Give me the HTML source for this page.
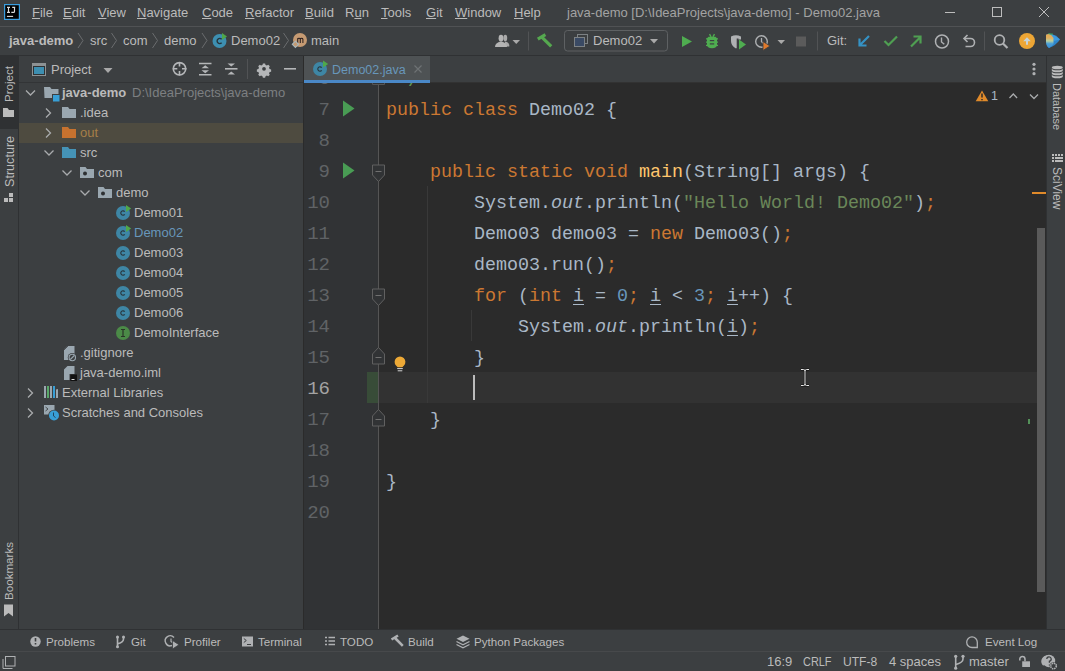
<!DOCTYPE html>
<html><head><meta charset="utf-8">
<style>
*{box-sizing:border-box;margin:0;padding:0}
html,body{width:1065px;height:671px;overflow:hidden;background:#3c3f41;font-family:"Liberation Sans",sans-serif;font-size:13px;color:#bbbbbb;position:relative}
.a{position:absolute}
svg{position:absolute;overflow:visible}
.t{position:absolute;white-space:pre;line-height:16px}
u{text-decoration:underline;text-underline-offset:1px;text-decoration-thickness:1px}
.code{position:absolute;left:386px;font-family:"Liberation Mono",monospace;font-size:18.33px;white-space:pre;line-height:31px;color:#a9b7c6}
.ln{position:absolute;font-family:"Liberation Mono",monospace;font-size:19px;white-space:pre;line-height:31px;color:#606366;text-align:right;width:30px;left:300px}
.k{color:#cc7832}.s{color:#6a8759}.n{color:#6897bb}.m{color:#ffc66d}.f{color:#a9b7c6;font-style:italic}
.ul{text-decoration:underline;text-underline-offset:3px;text-decoration-thickness:1px}
.tr{position:absolute;line-height:20px;white-space:pre;height:20px}
.bb{position:absolute;font-size:11.6px;line-height:16px;white-space:pre;top:634px;color:#bbbbbb}
.st{position:absolute;font-size:13px;line-height:16px;white-space:pre;top:654px;color:#bbbbbb}
</style></head><body>
<!-- backgrounds -->
<div class="a" style="left:0;top:26px;width:1065px;height:1px;background:#505254"></div>
<div class="a" style="left:0;top:55px;width:1065px;height:1px;background:#2f3133"></div>
<div class="a" style="left:0;top:56px;width:18px;height:73px;background:#2f3133"></div>
<div class="a" style="left:18px;top:56px;width:1px;height:573px;background:#2f3133"></div>
<div class="a" style="left:19px;top:82px;width:284px;height:1px;background:#323436"></div>
<div class="a" style="left:303px;top:56px;width:1px;height:573px;background:#2b2b2b"></div>
<div class="a" style="left:304px;top:82px;width:742px;height:1px;background:#323232"></div>
<div class="a" style="left:304px;top:83px;width:75px;height:546px;background:#313335"></div>
<div class="a" style="left:379px;top:83px;width:667px;height:546px;background:#2b2b2b"></div>
<div class="a" style="left:1046px;top:56px;width:1px;height:573px;background:#2f3133"></div>
<div class="a" style="left:0;top:629px;width:1065px;height:1px;background:#2f3133"></div>
<div class="a" style="left:0;top:651px;width:1065px;height:1px;background:#47494b"></div>

<!-- title bar -->
<svg style="left:4px;top:4px" width="16" height="16" viewBox="0 0 16 16">
<rect x="0.6" y="0.6" width="14.8" height="14.8" fill="#000" stroke="#3a9ee0" stroke-width="1.2"/>
<path d="M3 3.4h3M4.5 3.4v5M3 8.4h3M8.2 3.4h3M10.5 3.4v4q0 1-1 1h-2.2" stroke="#dcdcdc" stroke-width="1.15" fill="none"/>
<path d="M2.9 12.4h6.2" stroke="#dcdcdc" stroke-width="1.1"/>
</svg>
<div class="t" style="left:32px;top:5px"><u>F</u>ile</div>
<div class="t" style="left:63px;top:5px"><u>E</u>dit</div>
<div class="t" style="left:98px;top:5px"><u>V</u>iew</div>
<div class="t" style="left:137px;top:5px"><u>N</u>avigate</div>
<div class="t" style="left:202px;top:5px"><u>C</u>ode</div>
<div class="t" style="left:245px;top:5px"><u>R</u>efactor</div>
<div class="t" style="left:305px;top:5px"><u>B</u>uild</div>
<div class="t" style="left:345px;top:5px">R<u>u</u>n</div>
<div class="t" style="left:381px;top:5px"><u>T</u>ools</div>
<div class="t" style="left:426px;top:5px"><u>G</u>it</div>
<div class="t" style="left:455px;top:5px"><u>W</u>indow</div>
<div class="t" style="left:514px;top:5px"><u>H</u>elp</div>
<div class="t" style="left:567px;top:5px;color:#a3a3a3">java-demo [D:\IdeaProjects\java-demo] - Demo02.java</div>
<svg style="left:0;top:0" width="1065" height="26">
<path d="M945 12.5h10" stroke="#bdbdbd" stroke-width="1"/>
<rect x="992.5" y="7.5" width="9" height="9" fill="none" stroke="#bdbdbd" stroke-width="1"/>
<path d="M1039 7l10 10M1049 7l-10 10" stroke="#bdbdbd" stroke-width="1"/>
</svg>
<!-- breadcrumb -->
<div class="t" style="left:9px;top:33px;font-weight:bold">java-demo</div>
<svg style="left:0;top:27px" width="340" height="28">
<g stroke="#6a6c6e" stroke-width="1" fill="none">
<path d="M78 6l5 7.5l-5 7.5M111.5 6l5 7.5l-5 7.5M152.5 6l5 7.5l-5 7.5M202 6l5 7.5l-5 7.5M283.5 6l5 7.5l-5 7.5"/>
</g>
</svg>
<div class="t" style="left:90px;top:33px">src</div>
<div class="t" style="left:123px;top:33px">com</div>
<div class="t" style="left:164px;top:33px">demo</div>
<svg style="left:212px;top:33px" width="16" height="16" viewBox="0 0 16 16">
<circle cx="7.5" cy="8" r="7" fill="#3d8fb1"/>
<path d="M9.6 6.2a2.6 2.6 0 1 0 0 3.6" stroke="#26343b" stroke-width="1.4" fill="none"/>
<path d="M10 0v7l5-3.5z" fill="#4fa84a"/>
</svg>
<div class="t" style="left:231px;top:33px">Demo02</div>
<svg style="left:292px;top:32px" width="16" height="16" viewBox="0 0 16 16">
<circle cx="8" cy="8" r="7" fill="#c59a72"/>
<path d="M5.7 11V6.3M5.7 7.2q0-.9 1.3-.9t1.3.9V11M8.3 7.2q0-.9 1.3-.9t1.3.9V11" stroke="#2e2220" stroke-width="1.05" fill="none"/>
<path d="M3.4 9.2l3.1 3.1l-3.1 3.1l-3.1-3.1z" fill="#c59a72" stroke="#a9b8bd" stroke-width="1.1"/>
</svg>
<div class="t" style="left:311px;top:33px">main</div>

<!-- toolbar right -->
<svg style="left:0;top:27px" width="1065" height="28">
<!-- person -->
<ellipse cx="505.3" cy="11" rx="1.9" ry="3.2" fill="#a9a9a9"/>
<path d="M504.5 14.5q4 .3 4.8 3.5v1.5h-4z" fill="#a9a9a9"/>
<path d="M503.7 14.2l1.4 6" stroke="#3c3f41" stroke-width="1"/>
<ellipse cx="501" cy="11.2" rx="2.4" ry="3.4" fill="#b4b4b4"/>
<path d="M495 20q0-4.6 6-5.6q6 1 6 5.6z" fill="#b4b4b4"/>
<path d="M512.5 13h7.5l-3.75 4z" fill="#a9a9a9"/>
<path d="M528.5 4.5v19" stroke="#515355"/>
<!-- hammer -->
<path d="M537.8 12.2l7.6-4.6M541.8 10.2l9.4 9.2" stroke="#55a84f" stroke-width="3.2" fill="none"/>
<!-- combo -->
<rect x="564.5" y="3.5" width="103" height="20.5" rx="3" fill="none" stroke="#5e6163"/>
<rect x="577.5" y="7.5" width="10" height="9" fill="none" stroke="#7d8285"/>
<rect x="574" y="10" width="11" height="9.5" fill="#3c3f41"/>
<rect x="574.5" y="10.5" width="10" height="9" fill="#3a4a64" stroke="#7d8285"/>
<path d="M650 12h8l-4 4.5z" fill="#a9a9a9"/>
<!-- run -->
<path d="M682 9v11l10-5.5z" fill="#4fad50"/>
<!-- debug -->
<path d="M709.5 7.2l1.6 2.6M714.5 7.2l-1.6 2.6" stroke="#4fad50" stroke-width="1.4"/>
<path d="M708.5 9.8h7l1.5 1.5v6.2q0 3.8-5 3.8t-5-3.8v-6.2z" fill="#4fad50"/>
<path d="M706 11.8h12M706 15.2h12M706 18.4h12" stroke="#4fad50" stroke-width="1.3"/>
<rect x="709.8" y="13" width="4.4" height="1.2" fill="#3c3f41"/>
<rect x="709.8" y="16.3" width="4.4" height="1.2" fill="#3c3f41"/>
<!-- coverage -->
<path d="M731 9.5q5-2.5 10 0v3h-2.5v-1h-1.8v9.5l-0.7 .4q-5-2.2-5-7.4z" fill="#afb1b3"/>
<path d="M739 12.5v10l7-5z" fill="#4fad50"/>
<!-- profiler -->
<circle cx="761.5" cy="14.5" r="5.8" fill="none" stroke="#afb1b3" stroke-width="1.4"/>
<path d="M761.5 11v3.8l2.5 2" stroke="#afb1b3" stroke-width="1.3" fill="none"/>
<path d="M763 14.5v9l7-4.5z" fill="#e07a2c" stroke="#3c3f41" stroke-width="0.8"/>
<path d="M777.5 13h7.5l-3.75 4z" fill="#a9a9a9"/>
<!-- stop -->
<rect x="796" y="9.5" width="10" height="10" fill="#5b5b5b"/>
<path d="M817.5 4.5v19" stroke="#515355"/>
<!-- git update -->
<path d="M869 9l-9 9M859.5 11.5v7h7" stroke="#3592c4" stroke-width="2.2" fill="none"/>
<!-- commit check -->
<path d="M884.5 14l4 4l8.5-8.5" stroke="#4f9f52" stroke-width="2.2" fill="none"/>
<!-- push -->
<path d="M911 19.5l9-9M913.5 9.5h7v7" stroke="#4f9f52" stroke-width="2.2" fill="none"/>
<!-- history clock -->
<circle cx="942" cy="14.5" r="6.5" fill="none" stroke="#afb1b3" stroke-width="1.5"/>
<path d="M941.5 10.5v4.5l2.8 2.3" stroke="#afb1b3" stroke-width="1.4" fill="none"/>
<!-- rollback -->
<path d="M965 11.5h5.5a4 4 0 0 1 0 8h-5" stroke="#afb1b3" stroke-width="1.6" fill="none"/>
<path d="M967.5 8l-3.5 3.5l3.5 3.5" stroke="#afb1b3" stroke-width="1.6" fill="none"/>
<path d="M984.5 4.5v19" stroke="#515355"/>
<!-- search -->
<circle cx="999.5" cy="13" r="4.8" fill="none" stroke="#afb1b3" stroke-width="1.8"/>
<path d="M1003 16.5l4.5 4.5" stroke="#afb1b3" stroke-width="2.2"/>
<!-- update orange -->
<circle cx="1027" cy="14" r="8" fill="#eda635"/>
<path d="M1023.2 14.3L1027 10.2L1030.8 14.3H1028V17.8H1026V14.3z" fill="#c8d4d8"/>
<!-- logo -->
<defs><linearGradient id="lg1" x1="0" y1="0" x2="0" y2="1"><stop offset="0" stop-color="#e8a850"/><stop offset="0.3" stop-color="#e0b060"/><stop offset="0.5" stop-color="#b8d0a0"/><stop offset="0.7" stop-color="#4aa0d8"/><stop offset="1" stop-color="#3a8fd8"/></linearGradient></defs>
<path d="M1046 7.8L1049 6.8Q1055 7 1060 12.5Q1056 18.5 1049 21Q1046 19 1046 14z" fill="#2f86cc"/>
<path d="M1051 7.2Q1056 8.5 1060 12.5L1054 14z" fill="#3d9be0"/>
<path d="M1046 7.8L1049 6.8Q1052 8 1053.5 11V17Q1051.5 19.5 1049 21Q1046 19 1046 14z" fill="url(#lg1)"/>
<path d="M1048.5 6.8L1053 7.2" stroke="#40b060" stroke-width="1"/>
</svg>
<div class="t" style="left:593px;top:33px">Demo02</div>
<div class="t" style="left:827px;top:33px">Git:</div>
<!-- left stripe -->
<div class="t" style="left:1px;top:102px;transform-origin:0 0;transform:rotate(-90deg);font-size:11.6px;line-height:16px;color:#bbbbbb">Project</div>
<div class="t" style="left:1.5px;top:187px;transform-origin:0 0;transform:rotate(-90deg);font-size:12.6px;line-height:16px;color:#bbbbbb">Structure</div>
<div class="t" style="left:1px;top:600px;transform-origin:0 0;transform:rotate(-90deg);font-size:11.6px;line-height:16px;color:#bbbbbb">Bookmarks</div>
<svg style="left:0;top:0" width="19" height="630">
<path d="M3 108h4.5l1.5 2h5v7h-11z" fill="#bbbbbb"/>
<g fill="#bbbbbb"><rect x="9" y="193" width="4" height="4"/><rect x="4" y="198" width="4" height="4"/><rect x="9" y="198" width="4" height="4"/></g>
<path d="M4 604.5h9v12l-4.5-3.5l-4.5 3.5z" fill="#bbbbbb"/>
</svg>

<!-- project header -->
<svg style="left:0;top:56px" width="304" height="26">
<rect x="32" y="7" width="14" height="13" fill="#8d9294"/>
<rect x="33" y="10" width="12" height="9" fill="#2f3234"/>
<rect x="34" y="11" width="10" height="7" fill="#3d8fb1"/>
<path d="M103.5 12h9l-4.5 5z" fill="#a9a9a9"/>
<circle cx="179.5" cy="12.8" r="6.2" fill="none" stroke="#b4b6b8" stroke-width="1.6"/>
<path d="M179.5 6v4.5M179.5 15v4.5M172.8 12.8h4.5M182 12.8h4.5" stroke="#b4b6b8" stroke-width="1.6"/>
<path d="M199 7.5h12.5M199 18.8h12.5" stroke="#b4b6b8" stroke-width="1.6"/>
<path d="M201.5 12.3l3.75-3l3.75 3zM201.5 14.2l3.75 3l3.75-3z" fill="#b4b6b8"/>
<path d="M225 12.8h12.5" stroke="#b4b6b8" stroke-width="1.6"/>
<path d="M227.5 7.5h7.5l-3.75 3zM227.5 18.5h7.5l-3.75-3z" fill="#b4b6b8"/>
<path d="M247.5 3v20" stroke="#515355"/>
<g transform="translate(264 12.8) scale(0.85)">
<path d="M-1.3-6.3h2.6l.5 1.8 1.6.7 1.6-.9 1.8 1.8-.9 1.6.7 1.6 1.8.5v2.6l-1.8.5-.7 1.6.9 1.6-1.8 1.8-1.6-.9-1.6.7-.5 1.8h-2.6l-.5-1.8-1.6-.7-1.6.9-1.8-1.8.9-1.6-.7-1.6-1.8-.5v-2.6l1.8-.5.7-1.6-.9-1.6 1.8-1.8 1.6.9 1.6-.7z" fill="#b4b6b8"/>
<circle r="2.2" fill="#3c3f41"/>
</g>
<path d="M284 12.8h12" stroke="#b4b6b8" stroke-width="1.6"/>
</svg>
<div class="t" style="left:51px;top:62px">Project</div>

<!-- tree -->
<div class="a" style="left:19px;top:123px;width:284px;height:20px;background:#4e4b40"></div>
<svg style="left:0;top:0" width="304" height="430">
<g stroke="#a9abad" stroke-width="1.3" fill="none">
<path d="M26 90.5l4.5 4.5l4.5-4.5"/>
<path d="M46 108.5l4.5 4.5l-4.5 4.5"/>
<path d="M46 128.5l4.5 4.5l-4.5 4.5"/>
<path d="M44.5 150.5l4.5 4.5l4.5-4.5"/>
<path d="M62.5 170.5l4.5 4.5l4.5-4.5"/>
<path d="M80.5 190.5l4.5 4.5l4.5-4.5"/>
<path d="M28 388.5l4.5 4.5l-4.5 4.5"/>
<path d="M28 408.5l4.5 4.5l-4.5 4.5"/>
</g>
<!-- module folder -->
<path d="M44 87h6l1.5 2h7v9h-14z" fill="#9aa7b0"/>
<rect x="52" y="94" width="8" height="8" fill="#3c3f41"/>
<rect x="53" y="95" width="6.5" height="6.5" fill="#389fd6"/>
<!-- .idea -->
<path d="M62 107h6l1.5 2h6.5v9h-14z" fill="#9aa7b0"/>
<!-- out -->
<path d="M62 127h6l1.5 2h6.5v9h-14z" fill="#c7722f"/>
<!-- src -->
<path d="M62 147h6l1.5 2h6.5v9h-14z" fill="#4593b6"/>
<!-- com -->
<path d="M80 167h5.5l1.5 2h7v9h-14z" fill="#9aa7b0"/>
<circle cx="85" cy="173.5" r="2" fill="#2d3032"/>
<!-- demo -->
<path d="M98 187h5.5l1.5 2h7v9h-14z" fill="#9aa7b0"/>
<circle cx="103" cy="193.5" r="2" fill="#2d3032"/>
</svg>
<svg style="left:0;top:0;width:0;height:0">
<defs>
<g id="cls"><circle cx="7" cy="7" r="7" fill="#3e86a5"/><path d="M8.7 5.6a2.2 2.2 0 1 0 0 2.8" stroke="#28363d" stroke-width="1.15" fill="none"/></g>
<g id="run"><path d="M10 -1v7l5.2-3.5z" fill="#4fa84a"/></g>
</defs>
</svg>
<svg style="left:116px;top:206px" width="16" height="140">
<use href="#cls" y="0"/><use href="#run" y="0"/>
<use href="#cls" y="20"/><use href="#run" y="20"/>
<use href="#cls" y="40"/>
<use href="#cls" y="60"/>
<use href="#cls" y="80"/>
<use href="#cls" y="100"/>
<circle cx="7" cy="127" r="7" fill="#4b8a47"/>
<path d="M5 123.5h4M7 123.5v7M5 130.5h4" stroke="#2a3528" stroke-width="1.2" fill="none"/>
</svg>
<svg style="left:0;top:0" width="304" height="430">
<!-- gitignore -->
<path d="M64 346h10.5v14h-10.5z" fill="#9aa7b0"/>
<path d="M64 346h3.5l-3.5 3.5z" fill="#3c3f41"/>
<path d="M64 350l4-4" stroke="#3c3f41" stroke-width="0.8"/>
<circle cx="72.3" cy="357.5" r="4.5" fill="#3c3f41"/>
<circle cx="72.3" cy="357.5" r="3.2" fill="none" stroke="#9aa7b0" stroke-width="1.1"/>
<path d="M70.3 359.5l4-4" stroke="#9aa7b0" stroke-width="1.1"/>
<!-- iml -->
<path d="M64 366h10.5v14h-10.5z" fill="#9aa7b0"/>
<path d="M64 366h3.5l-3.5 3.5z" fill="#3c3f41"/>
<rect x="69.5" y="374" width="8" height="7.5" fill="#3c3f41"/>
<rect x="70.3" y="374.5" width="6.7" height="6.5" fill="#111"/>
<path d="M71.5 379.5h3" stroke="#ddd" stroke-width="1"/>
<!-- ext libs -->
<rect x="44" y="386" width="2" height="12" fill="#9aa7b0"/>
<rect x="47" y="386" width="2" height="12" fill="#59a869"/>
<rect x="50" y="386" width="2" height="12" fill="#9aa7b0"/>
<rect x="53" y="386" width="2" height="12" fill="#389fd6"/>
<path d="M56 389.5l2 -0.5v9h-2z" fill="#9aa7b0"/>
<!-- scratches -->
<rect x="44" y="405" width="10.5" height="9.5" fill="#9aa7b0"/>
<path d="M45.5 407l2.5 2l-2.5 2" stroke="#3c3f41" stroke-width="0.9" fill="none"/>
<circle cx="54" cy="415.5" r="5.8" fill="#3c3f41"/>
<circle cx="54" cy="415.5" r="5" fill="#389fd6"/>
<path d="M53.5 412.5v3.5l2 1.5" stroke="#23455e" stroke-width="1" fill="none"/>
</svg>
<div class="tr" style="left:62px;top:83px;font-weight:bold">java-demo</div>
<div class="tr" style="left:132px;top:83px;color:#7d7f81">D:\IdeaProjects\java-demo</div>
<div class="tr" style="left:80px;top:103px">.idea</div>
<div class="tr" style="left:80px;top:123px;color:#a67f48">out</div>
<div class="tr" style="left:80px;top:143px">src</div>
<div class="tr" style="left:98px;top:163px">com</div>
<div class="tr" style="left:116px;top:183px">demo</div>
<div class="tr" style="left:134px;top:203px">Demo01</div>
<div class="tr" style="left:134px;top:223px;color:#6897bb">Demo02</div>
<div class="tr" style="left:134px;top:243px">Demo03</div>
<div class="tr" style="left:134px;top:263px">Demo04</div>
<div class="tr" style="left:134px;top:283px">Demo05</div>
<div class="tr" style="left:134px;top:303px">Demo06</div>
<div class="tr" style="left:134px;top:323px">DemoInterface</div>
<div class="tr" style="left:80px;top:343px">.gitignore</div>
<div class="tr" style="left:80px;top:363px">java-demo.iml</div>
<div class="tr" style="left:62px;top:383px">External Libraries</div>
<div class="tr" style="left:62px;top:403px">Scratches and Consoles</div>
<!-- editor tab -->
<div class="a" style="left:304px;top:56px;width:126px;height:24px;background:#4e5254"></div>
<div class="a" style="left:304px;top:80px;width:126px;height:3px;background:#4a88c7"></div>
<svg style="left:313px;top:61px" width="16" height="16">
<use href="#cls" y="1"/><use href="#run" x="0" y="0.5"/>
</svg>
<div class="t" style="left:332px;top:62px;color:#6897bb;font-size:12.5px">Demo02.java</div>
<svg style="left:0;top:0" width="1065" height="100">
<path d="M414.5 65.5l7 7M421.5 65.5l-7 7" stroke="#6e7274" stroke-width="1.2"/>
<circle cx="1034" cy="64.3" r="1.6" fill="#afb1b3"/>
<circle cx="1034" cy="69" r="1.6" fill="#afb1b3"/>
<circle cx="1034" cy="73.7" r="1.6" fill="#afb1b3"/>
<!-- warning -->
<path d="M982 90.5l6.3 10.8h-12.6z" fill="#e08a2a"/>
<path d="M982 93.5v4M982 99v1.3" stroke="#2b2b2b" stroke-width="1.5"/>
<path d="M1009.5 98l3.8-4l3.8 4M1030 94.5l4 4l4-4" stroke="#a9abad" stroke-width="1.3" fill="none"/>
</svg>
<div class="t" style="left:991px;top:88px;color:#a9b7c6;font-size:12.5px">1</div>

<!-- gutter -->
<svg style="left:0;top:83px;overflow:hidden" width="1065" height="546">
<path d="M378.5 0v546" stroke="#555555" stroke-width="1"/>
<!-- line 6 end marker bottom -->
<path d="M372.5 -5v6.5h12v-6.5" fill="#313335" stroke="#555555"/>
<!-- run markers -->
<path d="M343 17.5v16l11.5-8z" fill="#499c54"/>
<path d="M343 79.5v16l11.5-8z" fill="#499c54"/>
<!-- fold start line9 -->
<path d="M372.5 82v10l6 6.5l6-6.5v-10z" fill="#313335" stroke="#606060"/>
<path d="M375.5 88.5h6" stroke="#707070"/>
<!-- fold start line13 -->
<path d="M372.5 206v10l6 6.5l6-6.5v-10z" fill="#313335" stroke="#606060"/>
<path d="M375.5 212.5h6" stroke="#707070"/>
<!-- fold end line15 -->
<path d="M372.5 281v-10l6-6.5l6 6.5v10z" fill="#313335" stroke="#606060"/>
<path d="M375.5 274.5h6" stroke="#707070"/>
<!-- change marker line16 -->
<rect x="367" y="289" width="11" height="31" fill="#384c38"/>
<path d="M378.5 289v31" stroke="#555555"/>
<!-- fold end line17 -->
<path d="M372.5 343v-10l6-6.5l6 6.5v10z" fill="#313335" stroke="#606060"/>
<path d="M375.5 336.5h6" stroke="#707070"/>
<!-- lightbulb -->
<path d="M396 282.5A5.4 5.4 0 1 1 404 282.5L402.3 284.3H397.7z" fill="#eda936"/>
<path d="M397.2 285.6h5.6M397.7 287.8h4.6" stroke="#d8d8d8" stroke-width="1"/>
</svg>
<!-- current line -->
<div class="a" style="left:379px;top:372px;width:658px;height:31px;background:#323232"></div>
<div class="a" style="left:427px;top:186px;width:1px;height:217px;background:#393939"></div>
<div class="a" style="left:471px;top:310px;width:1px;height:31px;background:#393939"></div>
<div class="a" style="left:473px;top:375px;width:2px;height:25px;background:#bbbbbb"></div>
<!-- line numbers -->
<div class="a" style="left:0;top:83px;width:379px;height:546px;overflow:hidden">
<div class="ln" style="top:-19px">6</div>
<div class="ln" style="top:12px">7</div>
<div class="ln" style="top:43px">8</div>
<div class="ln" style="top:74px">9</div>
<div class="ln" style="top:105px">10</div>
<div class="ln" style="top:136px">11</div>
<div class="ln" style="top:167px">12</div>
<div class="ln" style="top:198px">13</div>
<div class="ln" style="top:229px">14</div>
<div class="ln" style="top:260px">15</div>
<div class="ln" style="top:291px;color:#a4a3a3">16</div>
<div class="ln" style="top:322px">17</div>
<div class="ln" style="top:353px">18</div>
<div class="ln" style="top:384px">19</div>
<div class="ln" style="top:415px">20</div>
</div>
<!-- code -->
<div class="a" style="left:379px;top:83px;width:667px;height:546px;overflow:hidden">
<div class="code" style="left:7px;top:-17px;color:#629755"> */</div>
<div class="code" style="left:7px;top:12px"><span class="k">public class </span>Demo02 {</div>
<div class="code" style="left:7px;top:74px">    <span class="k">public static void </span><span class="m">main</span>(String[] args) {</div>
<div class="code" style="left:7px;top:105px">        System.<span class="f">out</span>.println(<span class="s">"Hello World! Demo02"</span>)<span class="k">;</span></div>
<div class="code" style="left:7px;top:136px">        Demo03 demo03 = <span class="k">new </span>Demo03()<span class="k">;</span></div>
<div class="code" style="left:7px;top:167px">        demo03.run()<span class="k">;</span></div>
<div class="code" style="left:7px;top:198px">        <span class="k">for </span>(<span class="k">int </span><span class="ul">i</span> = <span class="n">0</span><span class="k">; </span><span class="ul">i</span> &lt; <span class="n">3</span><span class="k">; </span><span class="ul">i</span>++) {</div>
<div class="code" style="left:7px;top:229px">            System.<span class="f">out</span>.println(<span class="ul">i</span>)<span class="k">;</span></div>
<div class="code" style="left:7px;top:260px">        }</div>
<div class="code" style="left:7px;top:322px">    }</div>
<div class="code" style="left:7px;top:384px">}</div>
</div>
<!-- scrollbar / markers -->
<div class="a" style="left:1037px;top:228px;width:8px;height:364px;background:#5a5a5a"></div>
<div class="a" style="left:1032px;top:192px;width:14px;height:2px;background:#e08a2a"></div>
<div class="a" style="left:1028px;top:419px;width:2px;height:5px;background:#549159"></div>
<!-- I-beam cursor -->
<svg style="left:798px;top:368px" width="14" height="20">
<path d="M3 1.5h2.5q1.5 0 1.5 1.5v13q0 1.5 1.5 1.5h2.5M11 1.5h-2.5q-1.5 0-1.5 1.5M7 16q0 1.5-1.5 1.5h-2.5" stroke="#111" stroke-width="2.2" fill="none"/>
<path d="M3 1.5h2.5q1.5 0 1.5 1.5v13q0 1.5 1.5 1.5h2.5M11 1.5h-2.5q-1.5 0-1.5 1.5M7 16q0 1.5-1.5 1.5h-2.5" stroke="#e8e8e8" stroke-width="1" fill="none"/>
</svg>
<!-- right stripe -->
<div class="t" style="left:1064px;top:83px;transform-origin:0 0;transform:rotate(90deg);font-size:11px;line-height:15px;color:#bbbbbb">Database</div>
<div class="t" style="left:1064px;top:167px;transform-origin:0 0;transform:rotate(90deg);font-size:12px;line-height:15px;color:#bbbbbb">SciView</div>
<svg style="left:1047px;top:56px" width="18" height="120">
<g fill="#bbbbbb">
<ellipse cx="10.3" cy="11.5" rx="5.5" ry="1.8"/>
<path d="M4.8 12.5q0 1.8 5.5 1.8t5.5-1.8v2q0 1.8-5.5 1.8t-5.5-1.8z"/>
<path d="M4.8 15.5q0 1.8 5.5 1.8t5.5-1.8v2q0 1.8-5.5 1.8t-5.5-1.8z"/>
<path d="M4.8 18.5q0 1.8 5.5 1.8t5.5-1.8v2q0 1.8-5.5 1.8t-5.5-1.8z"/>
</g>
<g fill="#bbbbbb">
<rect x="5" y="98" width="2" height="2"/><rect x="8" y="98" width="2" height="2"/><rect x="11" y="98" width="2" height="2"/><rect x="14" y="98" width="2" height="2"/>
<rect x="5" y="101" width="2" height="2"/><rect x="8" y="101" width="8" height="2"/>
<rect x="5" y="104" width="2" height="2"/><rect x="8" y="104" width="8" height="2"/>
<rect x="5" y="103" width="0" height="0"/>
<rect x="5" y="104" width="2" height="2"/>
<rect x="5" y="101" width="2" height="2"/>
</g>
</svg>

<!-- bottom toolbar -->
<svg style="left:0;top:630px" width="1065" height="41">
<!-- problems -->
<circle cx="35.5" cy="11.5" r="5.2" fill="#afb1b3"/>
<path d="M35.5 8v3.5M35.5 13v1.5" stroke="#3c3f41" stroke-width="1.6"/>
<!-- git branch -->
<path d="M117.5 7V17M123.5 7V9Q123.5 12 118 13.8" stroke="#afb1b3" stroke-width="1.6" fill="none"/>
<circle cx="117.5" cy="7" r="1.5" fill="#afb1b3"/><circle cx="117.5" cy="16.8" r="1.5" fill="#afb1b3"/><circle cx="123.5" cy="7" r="1.5" fill="#afb1b3"/>
<!-- profiler -->
<path d="M174 7.5a5 5 0 1 0 -2 8" stroke="#afb1b3" stroke-width="1.4" fill="none"/>
<path d="M171 8.5v3l2 1.5" stroke="#afb1b3" stroke-width="1.2" fill="none"/>
<path d="M172.5 10.5v8.5l6.5-4.25z" fill="#afb1b3" stroke="#3c3f41" stroke-width="0.8"/>
<!-- terminal -->
<rect x="242" y="6.5" width="11" height="10" fill="#afb1b3"/>
<path d="M243.8 8.5l2.5 2l-2.5 2M247 14.5h4" stroke="#3c3f41" stroke-width="1" fill="none"/>
<!-- todo -->
<path d="M325 7.5h2M325 11h2M325 14.5h2M328.5 7.5h6.5M328.5 11h6.5M328.5 14.5h6.5" stroke="#afb1b3" stroke-width="1.5"/>
<!-- build hammer -->
<path d="M391.5 9.5l6.5-4M395 8l7.8 7.8" stroke="#afb1b3" stroke-width="2.6" fill="none"/>
<!-- python packages layers -->
<path d="M463 5.5l6.5 3.3l-6.5 3.3l-6.5-3.3z" fill="#afb1b3"/>
<path d="M456.5 11.5l6.5 3.3l6.5-3.3M456.5 14.5l6.5 3.3l6.5-3.3" stroke="#afb1b3" stroke-width="1.3" fill="none"/>
<!-- event log -->
<path d="M973.5 17.5h-1.5a5.3 5.3 0 1 1 5.3-5.3v5.3z" stroke="#afb1b3" stroke-width="1.3" fill="none"/>
<!-- status left icon -->
<rect x="5.5" y="26.5" width="9.5" height="9.5" fill="none" stroke="#afb1b3" stroke-width="1"/>
<path d="M3 29v9.5h9.5" stroke="#afb1b3" stroke-width="1" fill="none"/>
<!-- branch status -->
<path d="M955.7 26.5V38M963 26.5V29Q963 32.5 956 34.5" stroke="#afb1b3" stroke-width="1.6" fill="none"/>
<circle cx="955.7" cy="26.3" r="1.6" fill="#afb1b3"/><circle cx="955.7" cy="38.2" r="1.6" fill="#afb1b3"/><circle cx="963" cy="26.3" r="1.6" fill="#afb1b3"/>
<!-- lock -->
<rect x="1022.2" y="31.3" width="7.8" height="5.7" fill="#afb1b3"/>
<path d="M1019.8 30.5V29A2.6 2.6 0 0 1 1025 29V31.3" stroke="#afb1b3" stroke-width="1.5" fill="none"/>
<!-- help/settings -->
<path d="M1043 35.5a6.5 6 0 1 1 11 -2.5" fill="#afb1b3"/>
<circle cx="1049" cy="31" r="6.2" fill="#afb1b3"/>
<path d="M1046.8 29a2.2 2.2 0 1 1 2.6 2.2v1.5M1049.4 34.5v1" stroke="#3c3f41" stroke-width="1.3" fill="none"/>
<circle cx="1053.5" cy="36" r="3.8" fill="#3c3f41"/>
<circle cx="1053.5" cy="36" r="2.8" fill="none" stroke="#afb1b3" stroke-width="1.6" stroke-dasharray="1.5 0.7"/>
</svg>
<div class="bb" style="left:46px">Problems</div>
<div class="bb" style="left:131px">Git</div>
<div class="bb" style="left:184px">Profiler</div>
<div class="bb" style="left:258px">Terminal</div>
<div class="bb" style="left:340px">TODO</div>
<div class="bb" style="left:408px">Build</div>
<div class="bb" style="left:474px">Python Packages</div>
<div class="bb" style="left:985px">Event Log</div>
<div class="st" style="left:767px">16:9</div>
<div class="st" style="left:803px;transform:scaleX(0.84);transform-origin:0 0">CRLF</div>
<div class="st" style="left:843px;transform:scaleX(0.93);transform-origin:0 0">UTF-8</div>
<div class="st" style="left:889px">4 spaces</div>
<div class="st" style="left:969px">master</div>
</body></html>
